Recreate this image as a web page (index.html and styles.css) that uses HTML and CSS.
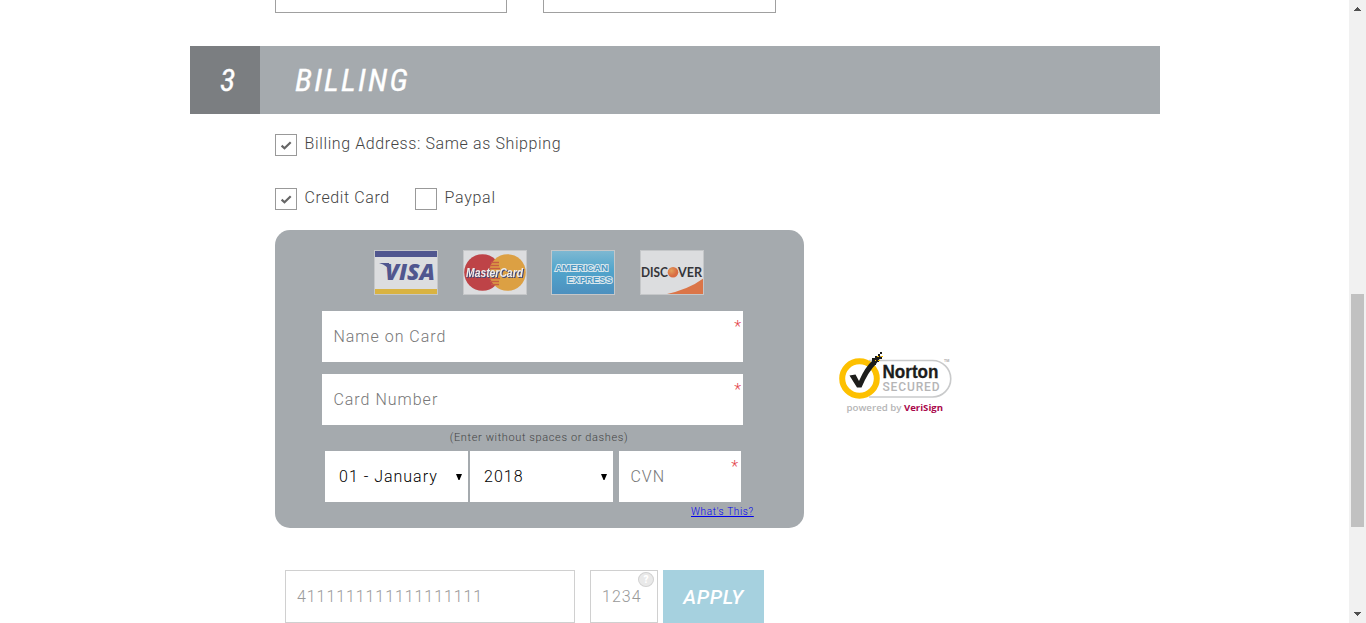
FILE: index.html
```html
<!DOCTYPE html>
<html lang="en">
<head>
<meta charset="utf-8">
<title>Checkout</title>
<link rel="stylesheet" href="styles.css">
</head>
<body>
<div class="viewport">
<main class="page">
  <div class="shipping-tail"><div class="tail-field first"></div><div class="tail-field"></div></div>
  <h2 class="section-head"><span class="step">3</span><span class="section-title">BILLING</span></h2>
  <div class="check-row same">
    <span class="box"><svg viewBox="0 0 20 20"><path d="M5.6 10.6 L8.5 13.2 L14.7 7.2"/></svg></span><span class="label">Billing Address: Same as Shipping</span>
  </div>
  <div class="check-row method">
    <span class="box"><svg viewBox="0 0 20 20"><path d="M5.6 10.6 L8.5 13.2 L14.7 7.2"/></svg></span><span class="label credit">Credit Card</span>
    <span class="box"></span><span class="label paypal">Paypal</span>
  </div>
  <div class="payment">
    <section class="card-panel">
      <div class="brands">
        <svg viewBox="0 0 64 45" class="brand">
          <rect width="64" height="45" fill="#dcdddf"/><rect width="64" height="7" fill="#50568f"/><rect y="39" width="64" height="6" fill="#d9b342"/>
          <text x="11" y="29.500" class="visa" textLength="50" lengthAdjust="spacingAndGlyphs">VISA</text><path d="M5 13h10l2 11q-3-9-12-11z" fill="#50568f"/>
          <rect x=".5" y=".5" width="63" height="44" class="edge"/>
        </svg>
        <svg viewBox="0 0 64 45" class="brand">
          <rect width="64" height="45" fill="#dcdddf"/><circle cx="19.500" cy="22.500" r="18.300" fill="#be4347"/><circle cx="44.500" cy="22.500" r="18.300" fill="#dca043"/>
          <path d="M28 12.500h8M27 15.500h9M26 18.500h11M26 28.500h11M27 31.500h9M28 34.500h8" stroke="#c85c43" stroke-width="1.400"/>
          <text x="3" y="26.500" class="mc" textLength="57" lengthAdjust="spacingAndGlyphs">MasterCard</text>
          <rect x=".5" y=".5" width="63" height="44" class="edge"/>
        </svg>
        <svg viewBox="0 0 64 45" class="brand">
          <defs><linearGradient id="amex" x2="0" y2="1"><stop stop-color="#80b9d2"/><stop offset=".45" stop-color="#51a5cc"/><stop offset="1" stop-color="#4d8fbe"/></linearGradient></defs>
          <rect width="64" height="45" fill="url(#amex)"/>
          <text x="4" y="21" class="amex" textLength="53" lengthAdjust="spacingAndGlyphs">AMERICAN</text>
          <text x="16" y="32.500" class="amex" textLength="45" lengthAdjust="spacingAndGlyphs">EXPRESS</text>
          <rect x=".5" y=".5" width="63" height="44" class="edge"/>
        </svg>
        <svg viewBox="0 0 64 45" class="brand">
          <defs><radialGradient id="disc" cx=".35" cy=".35"><stop stop-color="#e2a05a"/><stop offset="1" stop-color="#d96c43"/></radialGradient></defs>
          <rect width="64" height="45" fill="#dcdddf"/><path d="M23 45Q48 40 64 28V45z" fill="#db7548"/>
          <text x="1" y="26.500" class="discover" textLength="27" lengthAdjust="spacingAndGlyphs">DISC</text>
          <circle cx="33" cy="22.300" r="5.300" fill="url(#disc)"/>
          <text x="38" y="26.500" class="discover" textLength="24" lengthAdjust="spacingAndGlyphs">VER</text>
          <rect x=".5" y=".5" width="63" height="44" class="edge"/>
        </svg>
      </div>
      <div class="field">Name on Card<span class="req">*</span></div>
      <div class="field">Card Number<span class="req">*</span></div>
      <div class="note">(Enter without spaces or dashes)</div>
      <div class="expiry">
        <div class="select"><span>01 - January</span><svg class="arrow" viewBox="0 0 6 6"><path d="M0 0h6L3.500 6h-1z"/></svg></div>
        <div class="select"><span>2018</span><svg class="arrow" viewBox="0 0 6 6"><path d="M0 0h6L3.500 6h-1z"/></svg></div>
        <div class="field cvn">CVN<span class="req">*</span></div>
      </div>
      <a class="whats" href="#">What's This?</a>
    </section>
    <svg class="norton" viewBox="0 0 120 70">
      <path d="M31 15.500H94.500a18.200 18.200 0 0 1 0 36.500H31" fill="#fff" stroke="#c9cacb" stroke-width="1.600"/>
      <circle cx="21.500" cy="33.500" r="17.300" fill="#fff" stroke="#fdc000" stroke-width="6"/>
      <path d="M11.500 30.500l6-1 3.500 6.500Q27 22 35 15l4-2 2-3 2 2-5 7Q30 27 23.500 42.500h-4.500z" fill="#1d1d1b"/>
      <path d="M34 16v-3h3v-2h3V9h2V7h2v2h-2v3h2v2h-3v3h-3v3h-3z" fill="#1d1d1b"/>
      <path d="M37 15h1v1h-1zM39 11h2v1h-2zM40 15h2v1h-2zM43 11h2v1h-2z" fill="#fdc000"/>
      <text x="44.500" y="32.500" class="n-name" textLength="56" lengthAdjust="spacingAndGlyphs">Norton</text>
      <text x="44.500" y="46" class="n-sec" textLength="57" lengthAdjust="spacing">SECURED</text>
      <text x="106" y="17" class="n-tm">TM</text>
      <text x="8.500" y="66" class="n-pow" textLength="55" lengthAdjust="spacingAndGlyphs">powered by</text>
      <text x="66" y="66" class="n-pow veri" textLength="39" lengthAdjust="spacingAndGlyphs">VeriSign</text>
    </svg>
  </div>
  <div class="gift-row">
    <div class="gift number">4111111111111111111</div>
    <div class="gift pin">1234<span class="help">?</span></div>
    <div class="apply">APPLY</div>
  </div>
</main>
<aside class="scrollbar">
  <svg class="sb-arrow" viewBox="0 0 7 4"><path d="M3 0h1v1h1v1h1v1h1v1H0V3h1V2h1V1h1z"/></svg>
  <div class="thumb"></div>
  <svg class="sb-arrow down" viewBox="0 0 7 4"><path d="M0 0h7v1H6v1H5v1H4v1H3V3H2V2H1V1H0z"/></svg>
</aside>
</div>
</body>
</html>
```

FILE: styles.css
```css
* { box-sizing: border-box; }
body { margin: 0; background: #fff; font: 300 16px/20px Roboto, "Liberation Sans", sans-serif; letter-spacing: 1px; color: #444; overflow: hidden; }
.viewport { display: flex; height: 623px; overflow: hidden; }
.page { width: 970px; margin: 0 189px 0 190px; flex: none; }
.shipping-tail { display: flex; gap: 36px; padding-left: 85px; height: 13px; }
.tail-field { width: 233px; border: 1px solid #a0a0a0; border-top: 0; }
.tail-field.first { width: 232px; }
.section-head { display: flex; height: 68px; margin: 33px 0 0; background: #a5aaae; color: #fff; font: italic 400 32px/69px "Roboto Condensed", Roboto, sans-serif; letter-spacing: 2.2px; -webkit-text-stroke: .3px #fff; }
.step { width: 70px; background: #7b7e81; padding-left: 30px; }
.section-title { margin-left: 35px; }
.check-row { display: flex; padding-left: 85px; height: 22px; }
.same { margin-top: 20px; }
.method { margin-top: 32px; }
.box { width: 22px; height: 22px; border: 1px solid #999; margin-right: 8px; flex: none; }
.box svg { display: block; width: 20px; height: 20px; fill: none; stroke: #666; stroke-width: 2.2; }
.label { line-height: 20px; white-space: nowrap; letter-spacing: .61px; margin-left: -.4px; }
.credit { width: 110.4px; }
.paypal { letter-spacing: .7px; }
.payment { display: flex; align-items: flex-start; padding-left: 85px; margin-top: 20px; }
.card-panel { width: 529px; height: 298px; border-radius: 15px; background: #a5aaae; padding: 20px 61px 0 47px; }
.brands { display: flex; gap: 24.7px; padding-left: 52px; margin-bottom: 16px; }
.brand { display: block; width: 64px; height: 45px; flex: none; }
.edge { fill: none; stroke: #c5c7c9; }
.brand text { letter-spacing: 0; font-family: "Open Sans", sans-serif; font-weight: 800; }
.brand .visa { font-size: 22px; font-style: italic; fill: #50568f; }
.brand .mc { font: italic 700 12px "Liberation Sans", sans-serif; fill: #eee; filter: drop-shadow(1px 1px 0 #404878); }
.brand .amex { font: 700 9.5px "Liberation Sans", sans-serif; fill: #4997c3; stroke: #d9e6ec; stroke-width: 2px; paint-order: stroke; }
.brand .discover { font-family: Lato, sans-serif; font-size: 12.5px; font-weight: 700; fill: #353539; }
.field { position: relative; width: 421px; height: 51px; background: #fff; padding-left: 11.4px; line-height: 51px; color: #777; margin-bottom: 12px; }
.req { position: absolute; right: 1px; top: 6px; line-height: 20px; font-size: 16px; letter-spacing: 1px; color: #e33f4b; }
.note { height: 21px; margin: -7px -13px 0 0; padding-top: 1px; text-align: center; font-size: 11px; line-height: 14px; letter-spacing: .62px; color: #444; }
.expiry { display: flex; padding-left: 3px; gap: 2px; height: 51px; }
.select { display: flex; justify-content: space-between; align-items: center; width: 143px; height: 51px; background: #fff; color: #000; padding: 0 6px 0 14px; }
.arrow { width: 6px; height: 6px; }
.field.cvn { width: 122px; margin: 0 0 0 4px; }
.cvn .req { right: 2px; }
.whats { display: block; width: 64px; margin: 3px 0 0 369px; font-size: 10px; line-height: 14px; letter-spacing: .65px; color: #00e; white-space: nowrap; }
.norton { width: 120px; height: 70px; margin: 115px 0 0 34px; }
.norton text { letter-spacing: 0; }
.norton .n-name { font: 700 18px "Liberation Sans", sans-serif; fill: #1d1d1b; stroke: #1d1d1b; stroke-width: .3px; }
.norton .n-sec { font: 500 12px Roboto, sans-serif; fill: #b5b5b6; }
.n-tm { font: 700 3.5px Roboto, sans-serif; fill: #aaa; }
.norton .n-pow { font: 600 9.5px "Open Sans", sans-serif; fill: #b5b5b6; }
.norton .veri { font-weight: 700; fill: #a9074b; }
.gift-row { display: flex; margin-top: 42px; padding-left: 95px; height: 53px; }
.gift { border: 1px solid #d0d0d0; line-height: 51px; padding-left: 11px; color: #999; }
.number { width: 290px; margin-right: 15px; letter-spacing: .92px; }
.pin { position: relative; width: 68px; margin-right: 5px; }
.help { position: absolute; right: 3px; top: 1px; width: 16px; height: 15px; border: 1px solid #d2d2d2; border-radius: 50%; background: #e9e9e9; color: #fff; font-size: 10px; font-weight: 900; line-height: 13px; text-align: center; letter-spacing: 0; }
.apply { width: 101px; background: #a6d1df; color: #fff; text-align: center; font-size: 20px; font-style: italic; font-weight: 500; line-height: 54px; letter-spacing: .6px; }
.scrollbar { display: flex; flex-direction: column; align-items: center; width: 17px; height: 623px; background: #f1f1f1; flex: none; }
.sb-arrow { width: 7px; height: 4px; fill: #505050; margin-top: 7px; flex: none; shape-rendering: crispEdges; }
.thumb { width: 13px; height: 233px; margin-top: 283px; background: #c1c1c1; }
.down { margin-top: 85px; }
```
